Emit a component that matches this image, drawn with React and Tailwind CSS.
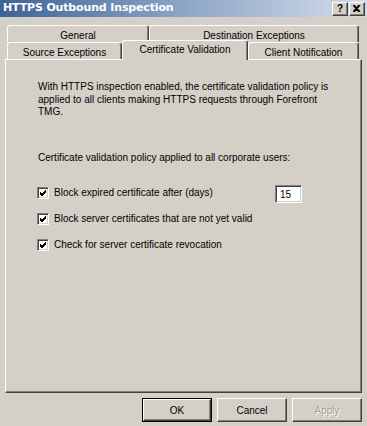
import React from "react";

const raised =
  "border border-t-white border-l-white border-r-[#404040] border-b-[#404040] shadow-[inset_-1px_-1px_0_#808080]";

function TitleBtn({ children }) {
  return (
    <div className={`w-[16px] h-[14px] bg-[#d4d0c8] flex items-center justify-center ${raised}`}>
      {children}
    </div>
  );
}

function Tab({ w, children, selected }) {
  return (
    <div
      className={`${w} flex items-center justify-center bg-[#d4d0c8] border-t border-l border-r border-t-white border-l-white border-r-[#404040] rounded-t-[3px] shadow-[inset_-1px_0_0_#808080] ${
        selected ? "h-[20px] -mb-[1px] relative z-10 pt-0 pb-[3px]" : "h-[17px] pt-[2px]"
      }`}
    >
      <span className="whitespace-nowrap">{children}</span>
    </div>
  );
}

function Check() {
  return (
    <div className="w-[12px] h-[12px] shrink-0 bg-white border border-t-[#808080] border-l-[#808080] border-r-white border-b-white shadow-[inset_1px_1px_0_#404040,inset_-1px_-1px_0_#d4d0c8] flex items-center justify-center">
      <svg width="8" height="8" viewBox="0 0 8 8">
        <path d="M1 3 L3 5 L7 1 M1 4 L3 6 L7 2 M1 5 L3 7 L7 3" stroke="#000" strokeWidth="1" fill="none" />
      </svg>
    </div>
  );
}

function Btn({ children, def, disabled }) {
  return (
    <div className={`w-[70px] h-[24px] ${def ? "border border-black" : ""}`}>
      <div
        className={`w-full h-full bg-[#d4d0c8] flex items-center justify-center ${raised} ${
          disabled ? "text-[#a09d97] [text-shadow:1px_1px_0_#fff]" : ""
        }`}
      >
        {children}
      </div>
    </div>
  );
}

export default function App() {
  return (
    <div className="w-[367px] h-[426px] bg-[#d4d0c8] flex flex-col overflow-hidden text-black text-[10px] font-['Liberation_Sans',sans-serif]">
      <div className="h-[17px] shrink-0 flex items-center justify-between pl-[3px] pr-[2px] bg-gradient-to-r from-[#3f6296] via-[#8ea6c6] to-[#d3dde9]">
        <span className="text-white font-bold text-[11px] font-['DejaVu_Sans',sans-serif] tracking-[-0.15px]">
          HTTPS Outbound Inspection
        </span>
        <div className="flex gap-[1px]">
          <TitleBtn>
            <span className="font-bold text-[10px] leading-none">?</span>
          </TitleBtn>
          <TitleBtn>
            <svg width="8" height="7" viewBox="0 0 8 7">
              <path d="M1 0 L7 7 M0 0 L6 7 M7 0 L1 7 M6 0 L0 7" stroke="#000" strokeWidth="1.2" fill="none" />
            </svg>
          </TitleBtn>
        </div>
      </div>

      <div className="px-[5px] pt-[8px] flex flex-col">
        <div className="flex pl-[2px] h-[17px]">
          <Tab w="w-[142px]">General</Tab>
          <Tab w="w-[210px]">Destination Exceptions</Tab>
        </div>
        <div className="flex items-end pl-[2px] h-[17px]">
          <Tab w="w-[115px]">Source Exceptions</Tab>
          <Tab w="w-[126px]" selected>
            Certificate Validation
          </Tab>
          <Tab w="w-[111px]">Client Notification</Tab>
        </div>
        <div className="h-[334px] border border-t-white border-l-white border-r-[#404040] border-b-[#404040] shadow-[inset_-1px_-1px_0_#808080] pl-[31px] pt-[21px]">
          <p className="ml-[1px] leading-[12.5px] w-[300px]">
            With HTTPS inspection enabled, the certificate validation policy is applied to all clients
            making HTTPS requests through Forefront TMG.
          </p>
          <p className="ml-[1px] leading-[13px] mt-[32px]">
            Certificate validation policy applied to all corporate users:
          </p>
          <div className="mt-[23px] flex flex-col gap-[14px]">
            <div className="flex items-center h-[12px]">
              <Check />
              <span className="ml-[5px] w-[221px]">Block expired certificate after (days)</span>
              <div className="w-[27px] h-[18px] bg-white border border-t-[#808080] border-l-[#808080] border-r-white border-b-white shadow-[inset_1px_1px_0_#404040,inset_-1px_-1px_0_#d4d0c8] flex items-center pl-[4px] mt-[3px]">
                15
              </div>
            </div>
            <div className="flex items-center h-[12px]">
              <Check />
              <span className="ml-[5px]">Block server certificates that are not yet valid</span>
            </div>
            <div className="flex items-center h-[12px]">
              <Check />
              <span className="ml-[5px]">Check for server certificate revocation</span>
            </div>
          </div>
        </div>
      </div>

      <div className="flex justify-end gap-[5px] pr-[5px] mt-[5px]">
        <Btn def>OK</Btn>
        <Btn>Cancel</Btn>
        <Btn disabled>Apply</Btn>
      </div>
    </div>
  );
}
